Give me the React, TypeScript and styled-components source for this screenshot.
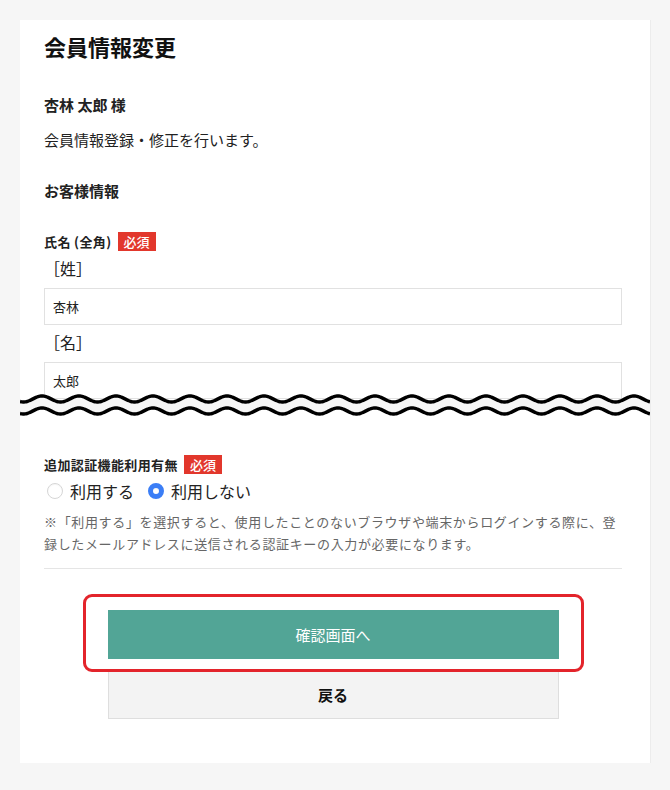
import styled, { createGlobalStyle } from 'styled-components';

const GlobalStyle = createGlobalStyle`
  html, body {
    margin: 0;
    padding: 0;
    background: #f6f6f6;
  }
  body {
    font-family: "Noto Sans CJK JP", "Noto Sans", sans-serif;
    color: #222;
  }
`;

const Page = styled.div`
  padding: 20px 20px 28px 20px;
  min-height: 790px;
  box-sizing: border-box;
`;

const Card = styled.div`
  width: 630px;
  background: #fff;
  box-shadow: 1px 0 0 #ececec;
`;

// upper part of the form, cut off by the wave
const TopSection = styled.div`
  height: 380px;
  overflow: hidden;
  padding: 10px 28px 0 24px;
  box-sizing: border-box;
`;

const BottomSection = styled.div`
  padding: 35px 28px 44px 24px;
`;

const Title = styled.h1`
  margin: 0;
  font-size: 22px;
  line-height: 32px;
  font-weight: 700;
  color: #111;
`;

const CustomerName = styled.p`
  margin: 31px 0 0;
  font-size: 15px;
  line-height: 24px;
  font-weight: 700;
`;

const Lead = styled.p`
  margin: 11px 0 0;
  font-size: 15px;
  line-height: 24px;
`;

const SectionHeading = styled.h2`
  margin: 27px 0 29px;
  font-size: 15px;
  line-height: 24px;
  font-weight: 700;
`;

const FieldLabel = styled.div`
  display: flex;
  align-items: center;
  gap: 6px;
  height: 19px;
  margin-bottom: 3px;
  font-size: 13px;
  font-weight: 700;
  letter-spacing: 0.03em;
`;

const RequiredBadge = styled.span`
  display: inline-block;
  padding: 0 6px;
  line-height: 19px;
  background: #e2372c;
  color: #fff;
  font-size: 13px;
  font-weight: 500;
  letter-spacing: 0;
`;

const SubLabel = styled.div`
  margin: 5px 0 8px;
  font-size: 16px;
  line-height: 24px;
`;

const TextInput = styled.input`
  display: block;
  width: 100%;
  height: 37px;
  padding: 0 8px;
  border: 1px solid #e1e1e1;
  border-radius: 0;
  box-sizing: border-box;
  font-family: inherit;
  font-size: 13px;
  color: #222;
  outline: none;
`;

const WaveSvg = styled.svg`
  display: block;
  position: relative;
  margin-top: -8px;
`;

const RadioGroup = styled.div`
  display: flex;
  align-items: center;
  gap: 11px;
  height: 24px;
  margin-top: 5px;
  font-size: 16px;
`;

const RadioOption = styled.label`
  display: flex;
  align-items: center;
  gap: 7px;
  cursor: pointer;
`;

const Radio = styled.input`
  appearance: none;
  width: 16px;
  height: 16px;
  margin: 0 0 0 3px;
  border-radius: 50%;
  border: 1px solid #d6d6d6;
  background: #fff;
  box-sizing: border-box;
  box-shadow: inset 0 1px 1px rgba(0, 0, 0, 0.04);

  &:checked {
    border: 5px solid #3b7ef6;
    background: #fff;
  }
`;

const Note = styled.p`
  margin: 8px 0 0;
  font-size: 13px;
  line-height: 22px;
  letter-spacing: 0.05em;
  color: #666;
`;

const Divider = styled.hr`
  margin: 13px 0 0;
  height: 1px;
  border: none;
  background: #e5e5e5;
`;

const ButtonArea = styled.div`
  display: flex;
  flex-direction: column;
  align-items: center;
  gap: 10px;
  margin-top: 41px;
`;

const PrimaryWrap = styled.div`
  position: relative;
  width: 451px;
`;

const Button = styled.button<{ $variant: 'primary' | 'back' }>`
  display: block;
  width: 451px;
  height: ${p => (p.$variant === 'primary' ? '49px' : '50px')};
  box-sizing: border-box;
  font-family: inherit;
  font-size: 15px;
  cursor: pointer;
  background: ${p => (p.$variant === 'primary' ? '#52a596' : '#f3f3f3')};
  color: ${p => (p.$variant === 'primary' ? '#fff' : '#111')};
  border: ${p => (p.$variant === 'primary' ? 'none' : '1px solid #dedede')};
  font-weight: ${p => (p.$variant === 'primary' ? 400 : 700)};
`;

// red annotation frame drawn over the primary button
const Highlight = styled.span`
  position: absolute;
  top: -16px;
  left: -25px;
  right: -25px;
  bottom: -13px;
  border: 3px solid #e3242b;
  border-radius: 9px;
  pointer-events: none;
`;

const WAVE_W = 630;
const PERIOD = 37;
const PHASE = 22;
const AMP = 3;

function wavePoints(cy: number) {
  const pts: [number, number][] = [];
  for (let x = 0; x <= WAVE_W; x += 1) {
    const y = cy - AMP * Math.cos(((x - PHASE) / PERIOD) * 2 * Math.PI);
    pts.push([x, +y.toFixed(2)]);
  }
  return pts;
}

function Wave() {
  const top = wavePoints(7);
  const bottom = wavePoints(19);
  const line = (pts: [number, number][]) =>
    'M' + pts.map(([x, y]) => `${x},${y}`).join(' L');
  const band =
    line(top) +
    ' L' +
    [...bottom].reverse().map(([x, y]) => `${x},${y}`).join(' L') +
    ' Z';
  const below = line(bottom) + ` L${WAVE_W},28 L0,28 Z`;

  return (
    <WaveSvg width={WAVE_W} height={28} viewBox={`0 0 ${WAVE_W} 28`}>
      <path d={band} fill="#f6f6f6" />
      <path d={below} fill="#fff" />
      <path d={line(top)} fill="none" stroke="#000" strokeWidth={3.4} />
      <path d={line(bottom)} fill="none" stroke="#000" strokeWidth={3.4} />
    </WaveSvg>
  );
}

export default function App() {
  return (
    <>
      <GlobalStyle />
      <Page>
        <Card>
          <TopSection>
            <Title>会員情報変更</Title>
            <CustomerName>杏林 太郎 様</CustomerName>
            <Lead>会員情報登録・修正を行います。</Lead>
            <SectionHeading>お客様情報</SectionHeading>

            <FieldLabel>
              氏名 (全角)<RequiredBadge>必須</RequiredBadge>
            </FieldLabel>
            <SubLabel>［姓］</SubLabel>
            <TextInput type="text" defaultValue="杏林" />
            <SubLabel>［名］</SubLabel>
            <TextInput type="text" defaultValue="太郎" />
          </TopSection>

          <Wave />

          <BottomSection>
            <FieldLabel>
              追加認証機能利用有無<RequiredBadge>必須</RequiredBadge>
            </FieldLabel>
            <RadioGroup>
              <RadioOption>
                <Radio type="radio" name="extraAuth" value="use" />
                利用する
              </RadioOption>
              <RadioOption>
                <Radio type="radio" name="extraAuth" value="none" defaultChecked />
                利用しない
              </RadioOption>
            </RadioGroup>
            <Note>
              ※「利用する」を選択すると、使用したことのないブラウザや端末からログインする際に、登録したメールアドレスに送信される認証キーの入力が必要になります。
            </Note>
            <Divider />

            <ButtonArea>
              <PrimaryWrap>
                <Button $variant="primary">確認画面へ</Button>
                <Highlight />
              </PrimaryWrap>
              <Button $variant="back">戻る</Button>
            </ButtonArea>
          </BottomSection>
        </Card>
      </Page>
    </>
  );
}
